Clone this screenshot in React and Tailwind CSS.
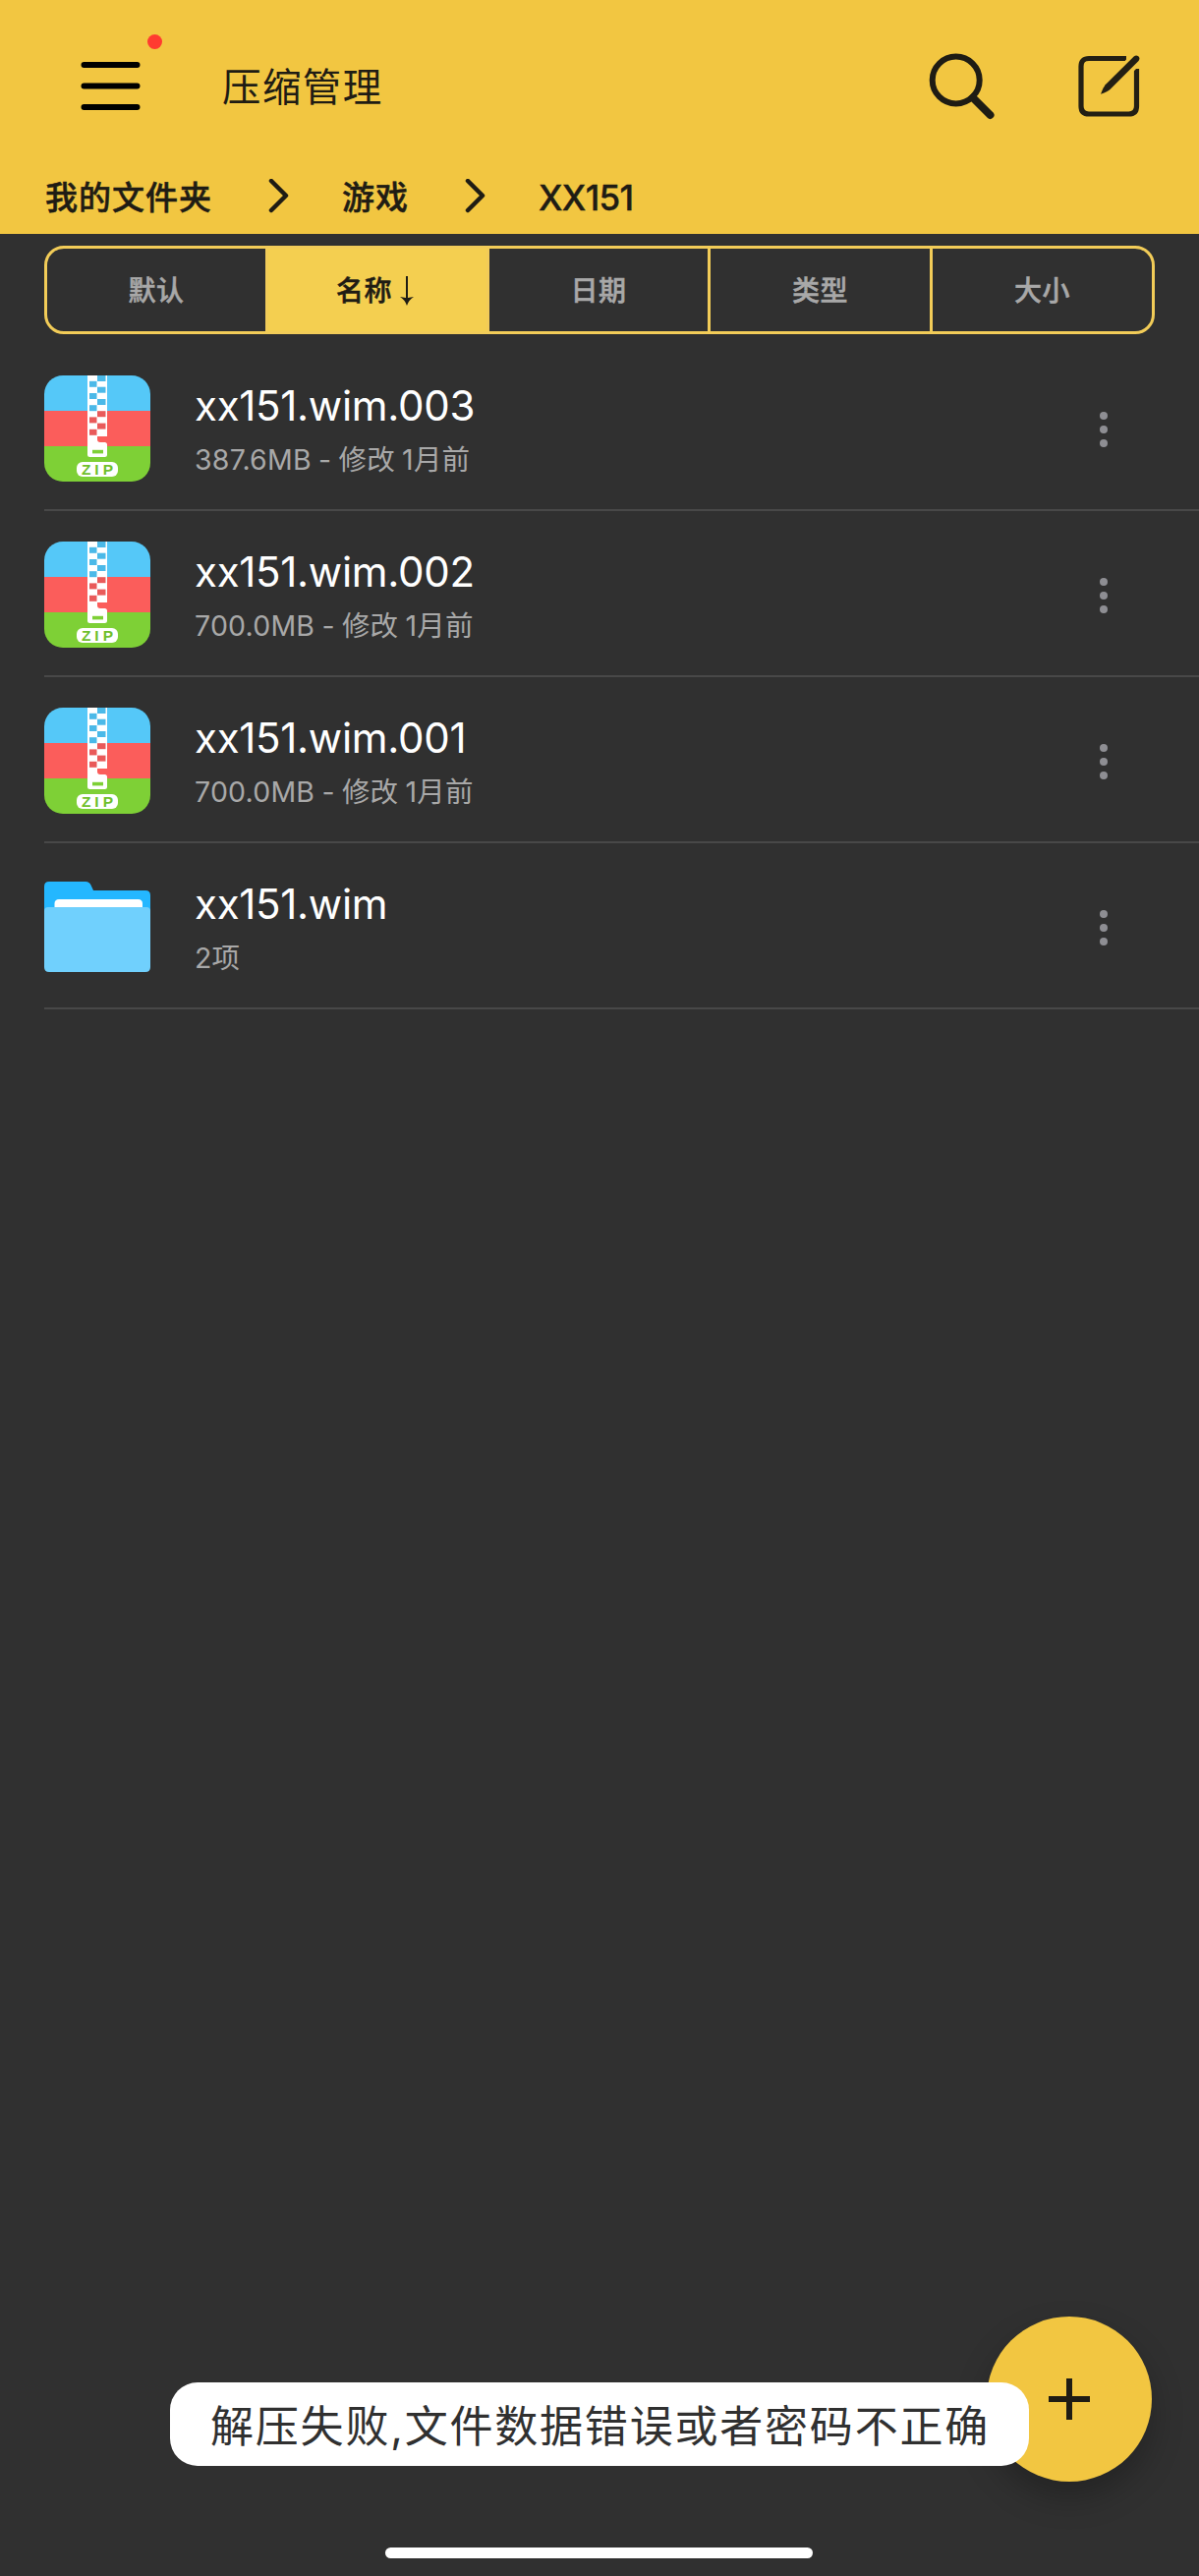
import React, { useState } from 'react';

const files = [
  { name: 'xx151.wim.003', info: '387.6MB - 修改 1月前', type: 'zip' },
  { name: 'xx151.wim.002', info: '700.0MB - 修改 1月前', type: 'zip' },
  { name: 'xx151.wim.001', info: '700.0MB - 修改 1月前', type: 'zip' },
  { name: 'xx151.wim', info: '2项', type: 'folder' },
];

const sortTabs = ['默认', '名称', '日期', '类型', '大小'];

function MenuIcon() {
  return (
    <svg width="62" height="52" viewBox="0 0 62 52" stroke="#000" strokeWidth="6" strokeLinecap="round">
      <path d="M4.5 4h54M4.5 25.5h54M4.5 47h54" />
    </svg>
  );
}

function SearchIcon() {
  return (
    <svg width="68" height="68" viewBox="0 0 68 68" fill="none" stroke="#1f1c14">
      <circle cx="27.7" cy="27.5" r="24" strokeWidth="6" />
      <path d="M45 45.5L62.5 63" strokeWidth="8" strokeLinecap="round" />
    </svg>
  );
}

function EditIcon() {
  return (
    <svg width="64" height="64" viewBox="0 0 64 64" fill="none" stroke="#231f14">
      <path d="M50 3.5H12Q4 3.5 4 11.5V52Q4 60 12 60H52.5Q60.5 60 60.5 52V14" strokeWidth="5.2" />
      <path d="M46 9L54 0H64V10L55 19V11z" fill="#f2c641" stroke="none" />
      <path d="M57.7 1.5Q60 -.4 62.3 1.2Q64.4 3.2 62.5 6L33.5 35Q31.5 37 24 39.7Q26 33.5 28.7 30.2z" fill="#231f14" stroke="none" />
    </svg>
  );
}

function Chevron() {
  return (
    <svg className="shrink-0" width="21" height="36" viewBox="0 0 21 36" fill="none" stroke="#1f1c14" strokeWidth="4.5" strokeLinecap="round" strokeLinejoin="round">
      <path d="M3 2L18 17L3 32" />
    </svg>
  );
}

function ZipIcon() {
  const left = [5.8, 18, 30.2, 42.4, 54.8];
  const right = [0, 11.7, 24, 36.2, 48.6];
  const shade = (y) => (y < 34 ? '#4bb9e8' : '#e95a5a');
  return (
    <svg width="108" height="108" viewBox="0 0 108 108">
      <clipPath id="tile">
        <rect width="108" height="108" rx="19" />
      </clipPath>
      <g clipPath="url(#tile)">
        <rect width="108" height="36" fill="#55c8f8" />
        <rect y="36" width="108" height="36" fill="#fb5d5b" />
        <rect y="72" width="108" height="36" fill="#7ed036" />
        <rect x="44" width="20" height="62" fill="#fff" />
        {left.map((y) => (
          <rect key={y} x="46" y={y} width="7.5" height="6" fill={shade(y)} />
        ))}
        {right.map((y) => (
          <rect key={y} x="54" y={y} width="8.5" height="6" fill={shade(y)} />
        ))}
        <path d="M44 61H54V65Q54 68 57 68H61.5Q64 68 64 70.5V80.5Q64 83 61.5 83H46.5Q44 83 44 80.5z" fill="#fff" />
        <rect x="49" y="75.8" width="11" height="3.6" fill="#7ed036" />
        <rect x="33" y="88" width="42" height="15" rx="6" fill="#fff" />
        <text y="101" fontSize="15.5" fontWeight="700" fill="#6fbf2c" textAnchor="middle" fontFamily="Liberation Sans, sans-serif">
          <tspan x="42.8">Z</tspan>
          <tspan x="53.5">I</tspan>
          <tspan x="65">P</tspan>
        </text>
      </g>
    </svg>
  );
}

function FolderIcon() {
  return (
    <svg width="108" height="108" viewBox="0 0 108 108">
      <path d="M0 40V13Q0 8 5 8H42Q46 8 47.5 11.5L50 17H103Q108 17 108 22V40z" fill="#24b7ff" />
      <path d="M10.5 36V30.5Q10.5 26 15 26H95.5Q100 26 100 30.5V36z" fill="#fff" />
      <path d="M0 38Q0 34 4 34H104Q108 34 108 38V95Q108 100 103 100H5Q0 100 0 95z" fill="#70d0fd" />
    </svg>
  );
}

function FileRow({ file }) {
  return (
    <div className="ml-[45px] h-[169px] flex items-start border-b-2 border-[#484848] pt-[31px]">
      {file.type === 'zip' ? <ZipIcon /> : <FolderIcon />}
      <div className="ml-[45px] flex-1">
        <p className="h-[62px] pt-[4px] text-[42px] leading-[54px] tracking-[-0.3px] text-white">{file.name}</p>
        <p className="text-[28.5px] leading-[48px] tracking-[0.2px] text-[#a8a8a8] [word-spacing:-1px]">{file.info}</p>
      </div>
      <button type="button" className="mr-[93px] mt-[37px] flex flex-col gap-[6px]">
        <span className="size-2 rounded-full bg-[#8e8e93]" />
        <span className="size-2 rounded-full bg-[#8e8e93]" />
        <span className="size-2 rounded-full bg-[#8e8e93]" />
      </button>
    </div>
  );
}

function App() {
  const [sort, setSort] = useState('名称');

  return (
    <div className="relative h-[2621px] w-[1220px] overflow-hidden bg-[#303030] font-['Inter','Noto_Sans_CJK_SC',sans-serif]">
      <header className="h-[238px] bg-[#f2c641] text-[#1f1c14]">
        <div className="flex h-[162px] items-center pt-[13px] pl-[81px] pr-[60px]">
          <div className="relative">
            <MenuIcon />
            <span className="absolute -top-[26.5px] left-[69px] size-[15px] rounded-full bg-[#ff3b30]" />
          </div>
          <h1 className="ml-[83px] flex-1 pt-[3px] text-[39.5px] leading-[48px] tracking-[1.4px]">压缩管理</h1>
          <SearchIcon />
          <div className="ml-[83px]">
            <EditIcon />
          </div>
        </div>
        <nav className="flex h-[76px] items-center pl-[46px] text-[33px] font-medium leading-[40px] tracking-[1px]">
          <span className="w-[227px] pt-[2px] [-webkit-text-stroke:0.5px]">我的文件夹</span>
          <Chevron />
          <span className="ml-[54px] w-[125px] pt-[2px] [-webkit-text-stroke:0.5px]">游戏</span>
          <Chevron />
          <span className="ml-[54px] pt-[1px] text-[35px] tracking-[-0.7px] [-webkit-text-stroke:0.4px]">XX151</span>
        </nav>
      </header>

      <div className="mx-[45px] mt-[12px] grid h-[90px] grid-cols-[225px_225px_225px_226px_1fr] overflow-hidden rounded-[20px] border-[3px] border-[#f2cc58]">
        {sortTabs.map((tab) => (
          <button
            key={tab}
            type="button"
            onClick={() => setSort(tab)}
            className={`flex items-center justify-center gap-[8px] border-r-[3px] border-[#f2cc58] pt-[2px] text-[28px] font-medium tracking-[0.5px] last:border-r-0 [-webkit-text-stroke:0.5px] ${
              sort === tab ? 'bg-[#f4cf50] pr-[5px] text-[#1f1c14]' : 'text-[#a8a8a8]'
            }`}
          >
            {tab}
            {sort === tab && (
              <svg width="14" height="32" viewBox="0 0 14 32">
                <path d="M6 1h2v22l6-1q-5 3-7 9q-2-6-7-9l6 1z" fill="#1f1c14" />
              </svg>
            )}
          </button>
        ))}
      </div>

      <main className="pt-[11px]">
        {files.map((file) => (
          <FileRow key={file.name} file={file} />
        ))}
      </main>

      <button
        type="button"
        className="absolute left-[1004px] top-[2357px] flex size-[168px] items-center justify-center rounded-full bg-[#f2c641] shadow-[0_16px_32px_rgba(0,0,0,0.25)]"
      >
        <svg width="42" height="42" viewBox="0 0 42 42" stroke="#1f1c14" strokeWidth="6">
          <path d="M21 0v42M0 21h42" />
        </svg>
      </button>

      <div className="absolute left-[173px] top-[2424px] flex h-[85px] w-[874px] items-center whitespace-nowrap rounded-[28px] bg-white pl-[41px] pt-[4px] text-[44px] leading-[60px] tracking-[1.8px] text-[#303030]">
        解压失败,文件数据错误或者密码不正确
      </div>

      <div className="absolute left-[392px] top-[2592px] h-[11px] w-[435px] rounded-full bg-white" />
    </div>
  );
}

export default App;
